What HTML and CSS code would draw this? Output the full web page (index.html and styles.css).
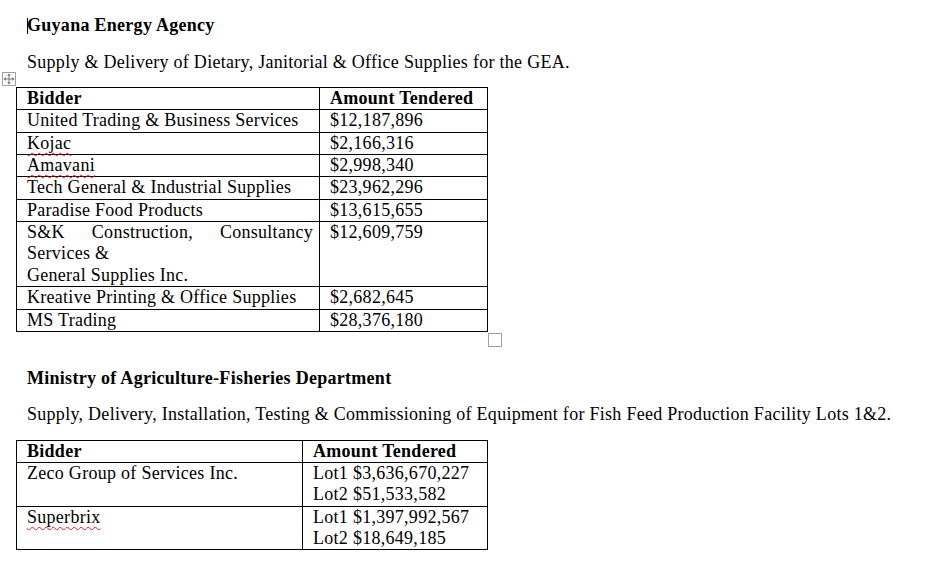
FILE: index.html
```html
<!DOCTYPE html>
<html>
<head>
<meta charset="utf-8">
<link rel="stylesheet" href="styles.css">
</head>
<body>
<div class="page">
  <h1 class="title"><span class="caret"></span>Guyana Energy Agency</h1>
  <p class="desc">Supply &amp; Delivery of Dietary, Janitorial &amp; Office Supplies for the GEA.</p>
  <div class="table-wrap">
    <span class="move-handle">
      <svg width="12" height="12" viewBox="0 0 12 12">
        <g fill="none" stroke="#7a7a7a" stroke-width="1">
          <path d="M6 1.5V10.5M1.5 6H10.5"/>
        </g>
        <g fill="#7a7a7a">
          <path d="M6 0.5L4 2.8H8Z"/>
          <path d="M6 11.5L4 9.2H8Z"/>
          <path d="M0.5 6L2.8 4V8Z"/>
          <path d="M11.5 6L9.2 4V8Z"/>
        </g>
      </svg>
    </span>
    <table class="bids bids-gea">
      <tr><th class="c1">Bidder</th><th class="c2">Amount Tendered</th></tr>
      <tr><td>United Trading &amp; Business Services</td><td>$12,187,896</td></tr>
      <tr><td><span class="spell">Kojac</span></td><td>$2,166,316</td></tr>
      <tr><td><span class="spell">Amavani</span></td><td>$2,998,340</td></tr>
      <tr><td>Tech General &amp; Industrial Supplies</td><td>$23,962,296</td></tr>
      <tr><td>Paradise Food Products</td><td>$13,615,655</td></tr>
      <tr><td><div class="justline">S&amp;K Construction, Consultancy</div><div>Services &amp;</div><div>General Supplies Inc.</div></td><td>$12,609,759</td></tr>
      <tr><td>Kreative Printing &amp; Office Supplies</td><td>$2,682,645</td></tr>
      <tr><td>MS Trading</td><td>$28,376,180</td></tr>
    </table>
    <span class="resize-handle"></span>
  </div>
  <div class="empty">&nbsp;</div>
  <h1 class="title">Ministry of Agriculture-Fisheries Department</h1>
  <p class="desc">Supply, Delivery, Installation, Testing &amp; Commissioning of Equipment for Fish Feed Production Facility Lots 1&amp;2.</p>
  <table class="bids bids-moa">
    <tr><th class="c1">Bidder</th><th class="c2">Amount Tendered</th></tr>
    <tr><td>Zeco Group of Services Inc.</td><td><div>Lot1 $3,636,670,227</div><div>Lot2 $51,533,582</div></td></tr>
    <tr><td><span class="spell">Superbrix</span></td><td><div>Lot1 $1,397,992,567</div><div>Lot2 $18,649,185</div></td></tr>
  </table>
</div>
</body>
</html>
```

FILE: styles.css
```css
html, body {
  margin: 0;
  padding: 0;
  background: #ffffff;
}

body {
  font-family: "Liberation Serif", "Times New Roman", serif;
  font-size: 18px;
  letter-spacing: 0.28px;
  line-height: 21.35px;
  color: #000000;
}

.page {
  padding: 15.2px 0 0 27px;
}

.title {
  position: relative;
  margin: 0 0 15px 0;
  font-size: 18px;
  font-weight: bold;
  line-height: 21.35px;
}

.caret {
  position: absolute;
  left: 0;
  top: 3px;
  width: 1px;
  height: 16px;
  background: #000000;
}

.desc {
  margin: 0 0 14.2px 0;
}

.table-wrap {
  position: relative;
}

.move-handle {
  position: absolute;
  left: -25px;
  top: -15px;
  width: 12px;
  height: 12px;
  border: 1px solid #a0a0a0;
  background: #ffffff;
  display: flex;
  align-items: center;
  justify-content: center;
}

.resize-handle {
  position: absolute;
  left: 461px;
  bottom: -15px;
  width: 12px;
  height: 12px;
  border: 1px solid #a0a0a0;
  background: #ffffff;
}

.bids {
  border-collapse: collapse;
  margin-left: -11px;
  width: 472px;
  table-layout: fixed;
}

.bids th,
.bids td {
  border: 1px solid #000000;
  padding: 0 6px 0 10px;
  text-align: left;
  vertical-align: top;
  font-weight: normal;
  white-space: nowrap;
}

.bids th {
  font-weight: bold;
}

.bids-gea .c1 { width: 286px; }
.bids-moa .c1 { width: 269px; }

.justline {
  text-align: justify;
  text-align-last: justify;
}

.spell {
  text-decoration: underline wavy #e02020;
  text-decoration-thickness: 1px;
  text-underline-offset: 3px;
  text-decoration-skip-ink: none;
}

.empty {
  height: 21.35px;
  margin-bottom: 14.6px;
}
```
